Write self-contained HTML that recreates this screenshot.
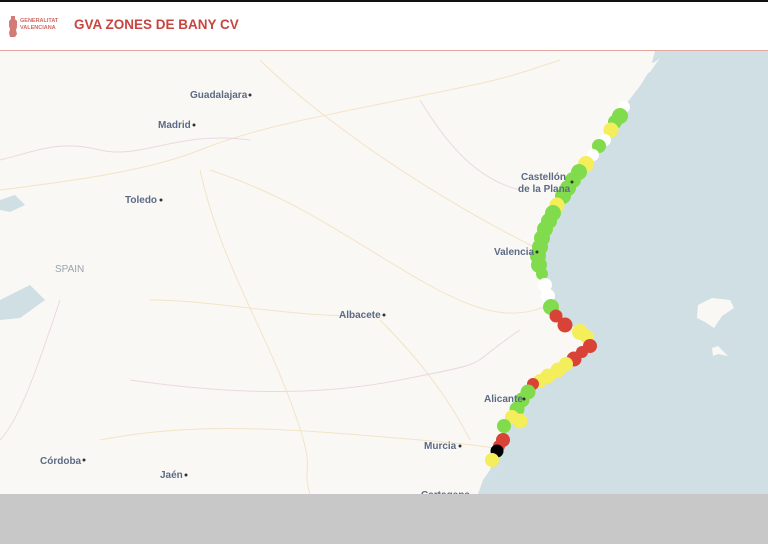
<!DOCTYPE html>
<html><head><meta charset="utf-8"><style>
html,body{margin:0;padding:0;width:768px;height:544px;overflow:hidden;background:#c8c8c8;font-family:"Liberation Sans",sans-serif}
#top{position:absolute;left:0;top:0;width:768px;height:2px;background:#111}
#hdr{position:absolute;left:0;top:2px;width:768px;height:48px;background:#fff;border-bottom:1px solid #e0a89e}
#title{position:absolute;left:74px;top:15px;font-size:13.5px;font-weight:bold;color:#c7453f;letter-spacing:0}
#logo{position:absolute;left:8px;top:13px}
#logotxt{position:absolute;left:20px;top:16px;font-size:5.5px;line-height:7px;color:#d06a64;font-weight:bold}
#map{position:absolute;left:0;top:51px;width:768px;height:443px;overflow:hidden;background:#faf8f4}
.lbl{font-family:"Liberation Sans",sans-serif;font-size:10px;font-weight:bold;fill:#5b6b86}
</style></head><body>
<div id="top"></div>
<div id="hdr">
<svg id="logo" width="10" height="24" viewBox="0 0 10 24"><path d="M3 1h4v3l2 2v6l-1 3 1 4-2 3H2l-1-4 1-4-1-3V6l2-2z" fill="#d47b75"/></svg>
<div id="logotxt">GENERALITAT<br>VALENCIANA</div>
<div id="title">GVA ZONES DE BANY CV</div>
</div>
<div id="map">
<svg width="768" height="443" viewBox="0 51 768 443">
<g fill="none" stroke="#f3e3c8" stroke-width="1">
<path d="M0 190 C80 180 150 170 200 150 S300 120 400 100 500 80 560 60"/>
<path d="M200 170 C220 260 260 320 290 400 S300 460 310 494"/>
<path d="M210 170 C300 200 350 240 420 280 S520 320 560 300"/>
<path d="M150 300 C220 300 300 320 380 315"/>
<path d="M100 440 C200 420 300 430 420 440 S480 450 500 460"/>
<path d="M260 60 C300 100 400 180 540 250"/>
<path d="M380 320 C420 360 450 400 470 440"/>
</g>
<g fill="none" stroke="#ead9e0" stroke-width="1">
<path d="M0 160 C40 150 60 140 100 150 S180 130 250 140"/>
<path d="M130 380 C200 390 300 400 400 380 S460 370 520 330"/>
<path d="M420 100 C450 150 480 180 520 190"/>
<path d="M60 300 C40 360 20 420 0 440"/>
</g>
<g fill="#cfdfe3">
<path d="M655 51 L768 51 L768 494 L478 494 L483 480 L490 470 L495 455 L503 432 L512 412 L522 396 L532 384 L550 373 L572 362 L586 352 L590 342 L578 330 L560 318 L548 300 L541 280 L538 258 L542 236 L552 212 L565 192 L580 172 L596 150 L612 124 L626 104 L640 86 L650 70 Z"/>
<path d="M0 200 L15 195 L25 205 L10 212 L0 210Z"/>
<path d="M0 300 L30 285 L45 300 L20 318 L0 320Z"/>
</g>
<path d="M698 305 L712 298 L730 300 L734 308 L722 316 L714 328 L705 322 L697 318 Z" fill="#faf8f4"/>
<path d="M712 348 L718 346 L728 356 L718 354 L713 356Z" fill="#faf8f4"/>
<path d="M630 70 L655 62 L660 58 L650 72 L640 78 Z" fill="#faf8f4"/>
<g>
<circle cx="624" cy="107" r="6" fill="#fff"/>
<circle cx="620" cy="116" r="8" fill="#80dc4c"/>
<circle cx="615" cy="122" r="7" fill="#80dc4c"/>
<circle cx="611" cy="130" r="7.5" fill="#f4ee5a"/>
<circle cx="605" cy="140" r="6" fill="#fff"/>
<circle cx="599" cy="146" r="7" fill="#80dc4c"/>
<circle cx="593" cy="155" r="6" fill="#fff"/>
<circle cx="586" cy="164" r="8" fill="#f4ee5a"/>
<circle cx="579" cy="172" r="8" fill="#80dc4c"/>
<circle cx="573" cy="180" r="8" fill="#80dc4c"/>
<circle cx="568" cy="188" r="8" fill="#80dc4c"/>
<circle cx="563" cy="196" r="8" fill="#80dc4c"/>
<circle cx="557" cy="205" r="7.5" fill="#f4ee5a"/>
<circle cx="553" cy="213" r="8" fill="#80dc4c"/>
<circle cx="549" cy="221" r="8" fill="#80dc4c"/>
<circle cx="545" cy="229" r="8" fill="#80dc4c"/>
<circle cx="542" cy="238" r="8" fill="#80dc4c"/>
<circle cx="540" cy="247" r="8" fill="#80dc4c"/>
<circle cx="538" cy="256" r="8" fill="#80dc4c"/>
<circle cx="539" cy="265" r="8" fill="#80dc4c"/>
<circle cx="542" cy="274" r="6" fill="#80dc4c"/>
<circle cx="545" cy="285" r="7" fill="#fff"/>
<circle cx="548" cy="296" r="7" fill="#fff"/>
<circle cx="551" cy="307" r="8" fill="#80dc4c"/>
<circle cx="556" cy="316" r="6.5" fill="#d94236"/>
<circle cx="565" cy="325" r="7.5" fill="#d94236"/>
<circle cx="580" cy="332" r="8" fill="#f4ee5a"/>
<circle cx="587" cy="337" r="7" fill="#f4ee5a"/>
<circle cx="590" cy="346" r="7" fill="#d94236"/>
<circle cx="582" cy="352" r="6" fill="#d94236"/>
<circle cx="574" cy="359" r="7.5" fill="#d94236"/>
<circle cx="566" cy="364" r="7" fill="#f4ee5a"/>
<circle cx="558" cy="370" r="7.5" fill="#f4ee5a"/>
<circle cx="548" cy="376" r="7.5" fill="#f4ee5a"/>
<circle cx="540" cy="381" r="7" fill="#f4ee5a"/>
<circle cx="533" cy="384" r="6" fill="#d94236"/>
<circle cx="528" cy="392" r="7.5" fill="#80dc4c"/>
<circle cx="522" cy="400" r="7.5" fill="#80dc4c"/>
<circle cx="517" cy="409" r="7.5" fill="#80dc4c"/>
<circle cx="512" cy="417" r="7" fill="#f4ee5a"/>
<circle cx="520" cy="421" r="7.5" fill="#f4ee5a"/>
<circle cx="504" cy="426" r="7" fill="#80dc4c"/>
<circle cx="503" cy="440" r="7" fill="#d94236"/>
<circle cx="499" cy="446" r="6" fill="#d94236"/>
<circle cx="497" cy="451" r="6.5" fill="#000"/>
<circle cx="492" cy="460" r="7" fill="#f4ee5a"/>
</g>
<g class="lbl">
<text x="190" y="98">Guadalajara</text><circle cx="250" cy="95" r="1.5" fill="#333"/>
<text x="158" y="128">Madrid</text><circle cx="194" cy="125" r="1.5" fill="#333"/>
<text x="125" y="203">Toledo</text><circle cx="161" cy="200" r="1.5" fill="#333"/>
<text x="55" y="272" style="fill:#9aa3ae;font-weight:normal">SPAIN</text>
<text x="339" y="318">Albacete</text><circle cx="384" cy="315" r="1.5" fill="#333"/>
<text x="40" y="464">Córdoba</text><circle cx="84" cy="460" r="1.5" fill="#333"/>
<text x="160" y="478">Jaén</text><circle cx="186" cy="475" r="1.5" fill="#333"/>
<text x="424" y="449">Murcia</text><circle cx="460" cy="446" r="1.5" fill="#333"/>
<text x="421" y="498">Cartagena</text>
<text x="484" y="402">Alicante</text><circle cx="524" cy="399" r="1.5" fill="#333"/>
<text x="494" y="255">Valencia</text><circle cx="537" cy="252" r="1.5" fill="#333"/>
<text x="521" y="180">Castellón</text>
<text x="518" y="192">de la Plana</text><circle cx="572" cy="182" r="1.5" fill="#333"/>
</g>
</svg>
</div>
</body></html>
